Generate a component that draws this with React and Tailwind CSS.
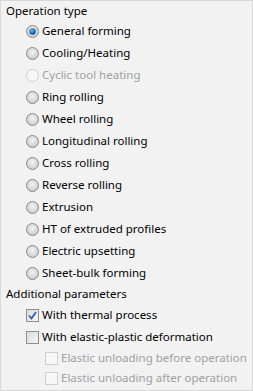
const ops = [
  { label: "General forming", checked: true },
  { label: "Cooling/Heating" },
  { label: "Cyclic tool heating", disabled: true },
  { label: "Ring rolling" },
  { label: "Wheel rolling" },
  { label: "Longitudinal rolling" },
  { label: "Cross rolling" },
  { label: "Reverse rolling" },
  { label: "Extrusion" },
  { label: "HT of extruded profiles" },
  { label: "Electric upsetting" },
  { label: "Sheet-bulk forming" },
]

function Radio({ checked, disabled }) {
  return (
    <svg width="13" height="13" viewBox="0 0 13 13" className="shrink-0">
      <defs>
        <radialGradient id="rg" cx="50%" cy="40%" r="60%">
          <stop offset="0%" stopColor="#f4f4f4" />
          <stop offset="100%" stopColor="#c9c9c9" />
        </radialGradient>
        <radialGradient id="dot" cx="40%" cy="35%" r="70%">
          <stop offset="0%" stopColor="#6fc1f2" />
          <stop offset="60%" stopColor="#1a6fb5" />
          <stop offset="100%" stopColor="#0b3d75" />
        </radialGradient>
      </defs>
      <circle cx="6.5" cy="6.5" r="6" fill={disabled ? "#f7f7f7" : "url(#rg)"} stroke={disabled ? "#cfcfcf" : "#8a8a8a"} />
      {checked && <circle cx="6.5" cy="6.5" r="3.2" fill="url(#dot)" />}
    </svg>
  )
}

function Check({ checked, disabled }) {
  return (
    <span className={`w-[13px] h-[13px] shrink-0 border flex items-center justify-center ${disabled ? "border-[#cfcfcf] bg-[#f7f7f7]" : "border-[#8e8f8f] bg-gradient-to-br from-[#dcdcdc] to-[#f6f6f6]"}`}>
      {checked && (
        <svg width="9" height="9" viewBox="0 0 9 9">
          <path d="M1 4.5 L3.5 7.5 L8 1" fill="none" stroke="#3c5ea8" strokeWidth="1.8" />
        </svg>
      )}
    </span>
  )
}

export default function App() {
  return (
    <div className="w-[253px] h-[391px] bg-[#f2f2f2] border border-[#d9d9d9] text-[11.5px] text-black font-['Noto_Sans',sans-serif] leading-none whitespace-nowrap">
      <div className="pl-[5px] h-[19px] flex items-center">Operation type</div>
      <div className="flex flex-col">
        {ops.map((o) => (
          <div key={o.label} className="h-[22px] flex items-center gap-[3px] pl-[25px]">
            <Radio checked={o.checked} disabled={o.disabled} />
            <span className={o.disabled ? "text-[#a0a0a0]" : ""}>{o.label}</span>
          </div>
        ))}
      </div>
      <div className="pl-[5px] h-[20px] flex items-center">Additional parameters</div>
      <div className="h-[22px] flex items-center gap-[3px] pl-[25px]">
        <Check checked />
        <span>With thermal process</span>
      </div>
      <div className="h-[22px] flex items-center gap-[3px] pl-[25px]">
        <Check />
        <span>With elastic-plastic deformation</span>
      </div>
      <div className="h-[20px] flex items-center gap-[3px] pl-[44px] text-[#a0a0a0]">
        <Check disabled />
        <span>Elastic unloading before operation</span>
      </div>
      <div className="h-[20px] flex items-center gap-[3px] pl-[44px] text-[#a0a0a0]">
        <Check disabled />
        <span>Elastic unloading after operation</span>
      </div>
    </div>
  )
}
